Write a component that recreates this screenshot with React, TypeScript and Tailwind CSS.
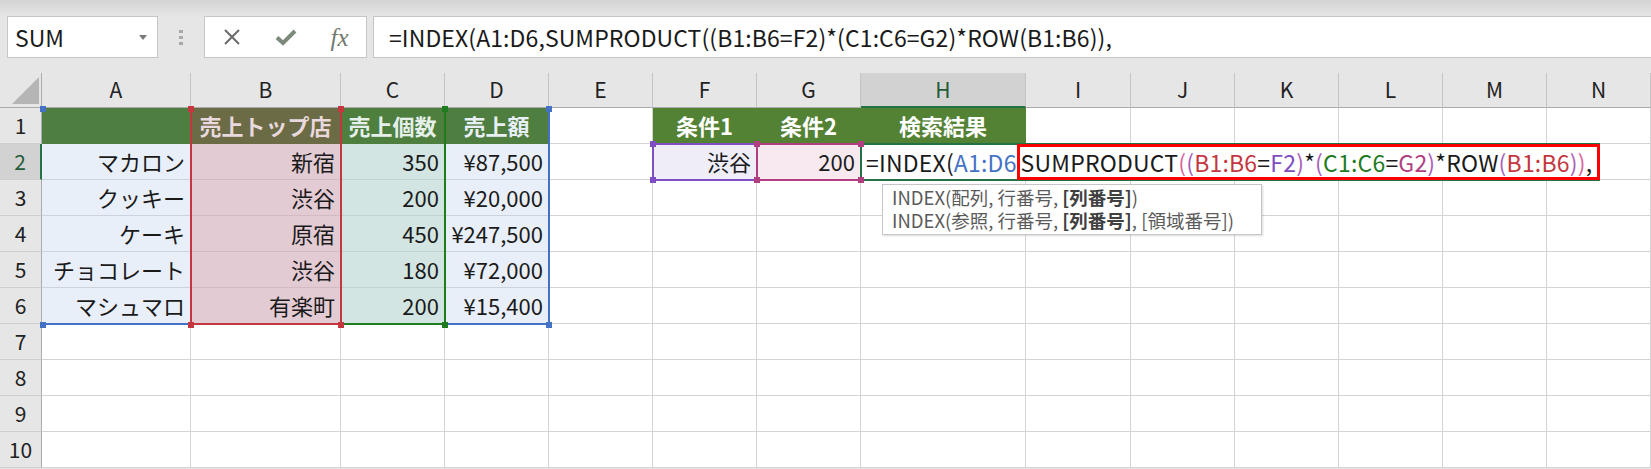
import React from "react";

type Cell = { v?: string; cls?: string };

const cols = [
  { key: "A", w: "w-[149px]" },
  { key: "B", w: "w-[150px]" },
  { key: "C", w: "w-[104px]" },
  { key: "D", w: "w-[104px]" },
  { key: "E", w: "w-[104px]" },
  { key: "F", w: "w-[104px]" },
  { key: "G", w: "w-[104px]" },
  { key: "H", w: "w-[165px]" },
  { key: "I", w: "w-[105px]" },
  { key: "J", w: "w-[104px]" },
  { key: "K", w: "w-[104px]" },
  { key: "L", w: "w-[104px]" },
  { key: "M", w: "w-[104px]" },
  { key: "N", w: "w-[104px]" },
];

const headA = "bg-[#4F7E41] border-[#4F7E41]";
const headBase = "font-bold justify-center";
const fillBlue = "bg-[#E9EFF9] border-[#CCD3DE] justify-end";
const fillRed = "bg-[#E3CBD4] border-[#D3BBC4] justify-end";
const fillGreen = "bg-[#D3E5E2] border-[#C2D4D1] justify-end";
const green = `bg-[#548235] border-[#548235] text-white ${headBase}`;

const products = [
  ["マカロン", "新宿", "350", "¥87,500"],
  ["クッキー", "渋谷", "200", "¥20,000"],
  ["ケーキ", "原宿", "450", "¥247,500"],
  ["チョコレート", "渋谷", "180", "¥72,000"],
  ["マシュマロ", "有楽町", "200", "¥15,400"],
];

function cellAt(r: number, c: string): Cell {
  if (r === 1) {
    if (c === "A") return { cls: headA };
    if (c === "B") return { v: "売上トップ店", cls: `bg-[#6B6B45] border-[#6B6B45] text-[#E9D9DE] ${headBase}` };
    if (c === "C") return { v: "売上個数", cls: `bg-[#4E7F3F] border-[#4E7F3F] text-[#E6F0EA] ${headBase}` };
    if (c === "D") return { v: "売上額", cls: `${headA} text-[#E9EFF7] ${headBase}` };
    if (c === "F") return { v: "条件1", cls: green };
    if (c === "G") return { v: "条件2", cls: green };
    if (c === "H") return { v: "検索結果", cls: green };
  }
  if (r >= 2 && r <= 6) {
    const p = products[r - 2];
    if (c === "A") return { v: p[0], cls: fillBlue };
    if (c === "B") return { v: p[1], cls: fillRed };
    if (c === "C") return { v: p[2], cls: fillGreen };
    if (c === "D") return { v: p[3], cls: fillBlue };
  }
  if (r === 2) {
    if (c === "F") return { v: "渋谷", cls: "bg-[#EEEDF8] border-[#D4D4D4] justify-end" };
    if (c === "G") return { v: "200", cls: "bg-[#F8E9F0] border-[#D4D4D4] justify-end" };
  }
  return { cls: "bg-white border-[#D4D4D4]" };
}

const font = "font-['Noto_Sans_CJK_JP','Liberation_Sans',sans-serif]";

export default function App() {
  const rows = [1, 2, 3, 4, 5, 6, 7, 8, 9, 10];
  return (
    <div className={`relative w-[1651px] h-[469px] overflow-hidden bg-[#E6E6E6] text-[#1A1A1A] ${font}`}>
      {/* window top */}
      <div className="h-[16px] bg-gradient-to-b from-[#D4D4D4] to-[#E6E6E6]" />

      {/* formula bar */}
      <div className="flex h-[42px]">
        <div className="ml-[7px] w-[151px] flex items-center bg-white border border-[#C6C6C6] pl-[7px] pr-[10px]">
          <span className="text-[23px] leading-none">SUM</span>
          <svg className="ml-auto" width="8" height="5" viewBox="0 0 8 5">
            <path d="M0 0h8L4 5z" fill="#7A7A7A" />
          </svg>
        </div>
        <div className="w-[46px] flex flex-col items-center justify-center gap-[3px]">
          <div className="w-[4px] h-[3px] bg-[#A8A8A8]" />
          <div className="w-[4px] h-[3px] bg-[#A8A8A8]" />
          <div className="w-[4px] h-[3px] bg-[#A8A8A8]" />
        </div>
        <div className="w-[163px] flex bg-white border border-[#C6C6C6]">
          <div className="w-[54px] flex items-center justify-center">
            <svg width="18" height="18" viewBox="0 0 18 18">
              <path d="M2 2L16 16M16 2L2 16" stroke="#6A6A6A" strokeWidth="2" />
            </svg>
          </div>
          <div className="w-[54px] flex items-center justify-center">
            <svg width="22" height="18" viewBox="0 0 22 18">
              <path d="M2 9.5L8 15L20 3" stroke="#7B8A7B" strokeWidth="4" fill="none" />
            </svg>
          </div>
          <div className="w-[53px] flex items-center justify-center">
            <span className="font-['Liberation_Serif',serif] italic text-[25px] leading-none text-[#72786F]">fx</span>
          </div>
        </div>
        <div className="ml-[6px] flex-1 flex items-center bg-white border-y border-l border-[#C6C6C6] pl-[15px]">
          <span className="text-[23px] leading-none tracking-[0.1px] whitespace-nowrap">
            =INDEX(A1:D6,SUMPRODUCT((B1:B6=F2)*(C1:C6=G2)*ROW(B1:B6)),
          </span>
        </div>
      </div>

      <div className="h-[15px]" />

      {/* column headers */}
      <div className="flex h-[35px]">
        <div className="w-[42px] relative border-r border-b border-[#ABABAB]">
          <svg className="absolute left-[12px] top-[4px]" width="27" height="27" viewBox="0 0 27 27">
            <path d="M0 27H27V0z" fill="#B5B5B5" />
          </svg>
        </div>
        {cols.map((c) => (
          <div
            key={c.key}
            className={`${c.w} flex items-center justify-center text-[21px] ${
              c.key === "H"
                ? "bg-[#D2D2D2] border-r border-r-[#C4C4C4] border-b-2 border-b-[#217346] text-[#1F5B38]"
                : "border-r border-r-[#C4C4C4] border-b border-b-[#ABABAB] text-[#222]"
            }`}
          >
            {c.key}
          </div>
        ))}
      </div>

      {/* rows */}
      {rows.map((r) => (
        <div key={r} className="flex h-[36px]">
          <div
            className={`w-[42px] flex items-center justify-center text-[21px] border-b border-b-[#CFCFCF] ${
              r === 2
                ? "bg-[#D2D2D2] border-r-2 border-r-[#217346] text-[#1F5B38]"
                : "border-r border-r-[#ABABAB] text-[#222]"
            }`}
          >
            {r}
          </div>
          {cols.map((c) => {
            const cell = cellAt(r, c.key);
            return (
              <div
                key={c.key}
                className={`${c.w} flex items-center px-[5px] border-r border-b text-[22px] whitespace-nowrap ${cell.cls}`}
              >
                {cell.v}
              </div>
            );
          })}
        </div>
      ))}

      {/* reference range borders */}
      <div className="absolute left-[42px] top-[108px] w-[508px] h-[217px] border-r-2 border-b-2 border-[#4472C4]" />
      <div className="absolute left-[342px] top-[108px] w-[104px] h-[217px] border-r-2 border-b-2 border-[#1E7B1E]" />
      <div className="absolute left-[190px] top-[108px] w-[152px] h-[217px] border-l-2 border-r-2 border-b-2 border-[#C4373F]" />
      <div className="absolute left-[652px] top-[143px] w-[106px] h-[38px] border-2 border-[#7E4EC2]" />
      <div className="absolute left-[756px] top-[143px] w-[106px] h-[38px] border-2 border-[#B13F7F]" />

      {/* editing cell H2 */}
      <div className="absolute left-[860px] top-[143px] h-[38px] flex items-stretch bg-white border-l-2 border-t-2 border-b-2 border-[#217346] pl-[4px] text-[23px] tracking-[0.2px] leading-none whitespace-nowrap">
        <span className="self-center">
          =INDEX(<span className="text-[#4472C4]">A1:D6</span>
        </span>
        <span className="-my-[1px] flex items-center border-[3px] border-[#FF0000] pl-[1px] pr-[5px]">
          SUMPRODUCT
          <span className="text-[#D9679A]">(</span>
          <span className="text-[#A862B8]">(</span>
          <span className="text-[#C4373F]">B1:B6</span>=<span className="text-[#7E4EC2]">F2</span>
          <span className="text-[#A862B8]">)</span>*<span className="text-[#A862B8]">(</span>
          <span className="text-[#1E7B1E]">C1:C6</span>=<span className="text-[#B13F7F]">G2</span>
          <span className="text-[#A862B8]">)</span>*ROW<span className="text-[#A862B8]">(</span>
          <span className="text-[#C4373F]">B1:B6</span>
          <span className="text-[#A862B8]">)</span>
          <span className="text-[#D9679A]">)</span>,
        </span>
      </div>

      {/* selection handles */}
      <div className="absolute left-[40px] top-[106px] w-[6px] h-[6px] bg-[#4472C4]" />
      <div className="absolute left-[546px] top-[106px] w-[6px] h-[6px] bg-[#4472C4]" />
      <div className="absolute left-[40px] top-[322px] w-[6px] h-[6px] bg-[#4472C4]" />
      <div className="absolute left-[546px] top-[322px] w-[6px] h-[6px] bg-[#4472C4]" />
      <div className="absolute left-[442px] top-[106px] w-[6px] h-[6px] bg-[#1E7B1E]" />
      <div className="absolute left-[442px] top-[322px] w-[6px] h-[6px] bg-[#1E7B1E]" />
      <div className="absolute left-[188px] top-[106px] w-[6px] h-[6px] bg-[#C4373F]" />
      <div className="absolute left-[338px] top-[106px] w-[6px] h-[6px] bg-[#C4373F]" />
      <div className="absolute left-[188px] top-[322px] w-[6px] h-[6px] bg-[#C4373F]" />
      <div className="absolute left-[338px] top-[322px] w-[6px] h-[6px] bg-[#C4373F]" />
      <div className="absolute left-[650px] top-[141px] w-[6px] h-[6px] bg-[#7E4EC2]" />
      <div className="absolute left-[650px] top-[177px] w-[6px] h-[6px] bg-[#7E4EC2]" />
      <div className="absolute left-[754px] top-[141px] w-[6px] h-[6px] bg-[#B13F7F]" />
      <div className="absolute left-[754px] top-[177px] w-[6px] h-[6px] bg-[#B13F7F]" />
      <div className="absolute left-[858px] top-[141px] w-[6px] h-[6px] bg-[#B13F7F]" />
      <div className="absolute left-[858px] top-[177px] w-[6px] h-[6px] bg-[#B13F7F]" />

      {/* function tooltip */}
      <div className="absolute left-[882px] top-[184px] w-[380px] h-[51px] bg-white border border-[#C6C6C6] shadow-[1px_1px_2px_rgba(0,0,0,0.15)] pl-[9px] pt-[1px] text-[18.5px] leading-[23px] text-[#5A5A5A] whitespace-nowrap">
        <div>
          INDEX(配列, 行番号, <b className="text-[#404040]">[列番号]</b>)
        </div>
        <div>
          INDEX(参照, 行番号, <b className="text-[#404040]">[列番号]</b>, [領域番号])
        </div>
      </div>
    </div>
  );
}
